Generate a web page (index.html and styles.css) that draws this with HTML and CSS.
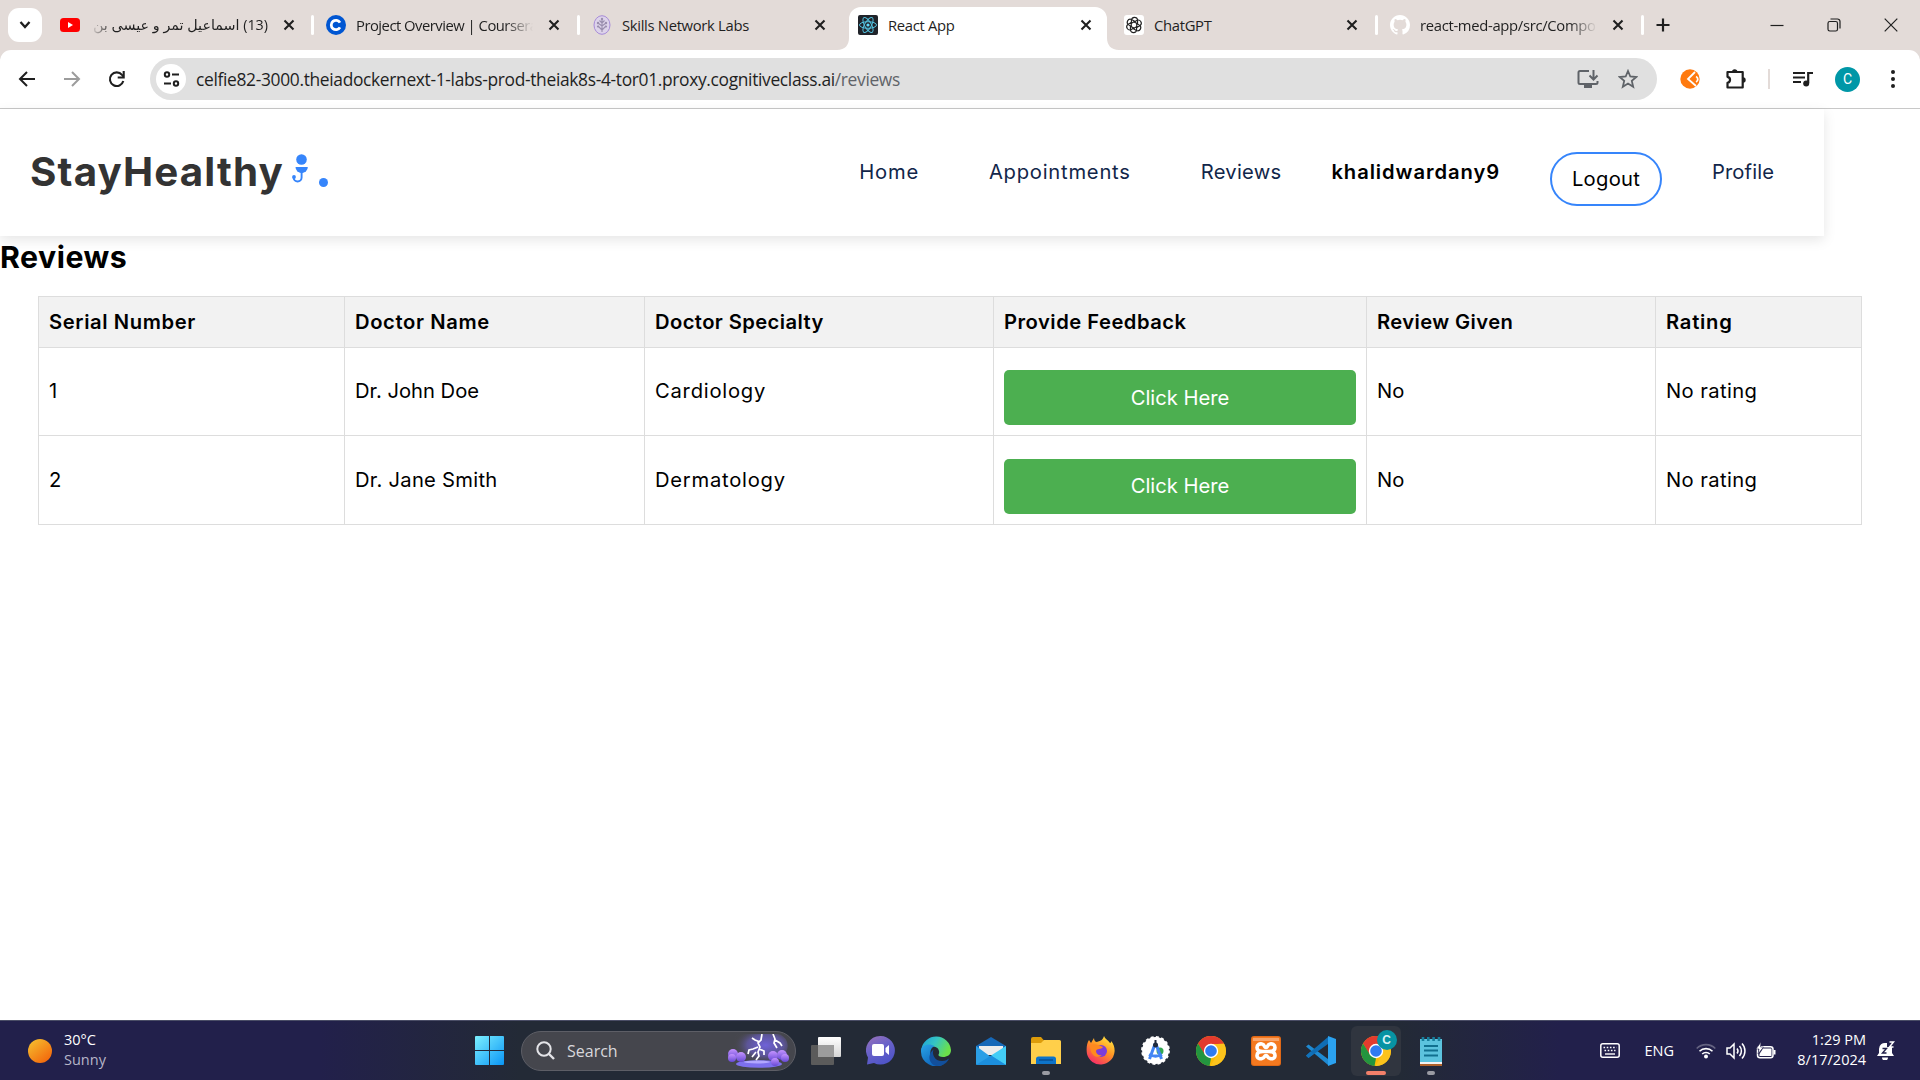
FILE: index.html
```html
<!DOCTYPE html>
<html lang="en">
<head>
<meta charset="utf-8">
<title>React App</title>
<link rel="stylesheet" href="styles.css">
</head>
<body>
<div class="screen">
  <header class="tabstrip">
    <button class="tab-search"><svg width="14" height="10" viewBox="0 0 14 10"><path d="M2.5 2l4.500 5 4.500-5" fill="none" stroke="#1f1f1f" stroke-width="2.300"/></svg></button>
    <div class="tab tab-first">
      <svg class="fav" viewBox="0 0 20 20"><rect y="3" width="20" height="14" rx="3.500" fill="#f00"/><path d="M8 7l5 3-5 3z" fill="#fff"/></svg>
      <span class="tab-title rtl" dir="rtl">(13) اسماعيل تمر و عيسى بن</span>
      <svg class="x" viewBox="0 0 12 12"><path d="M1.500 1.500l9 9M10.500 1.500l-9 9"/></svg>
    </div>
    <div class="tab sep">
      <svg class="fav" viewBox="0 0 20 20"><circle cx="10" cy="10" r="10" fill="#0056d2"/><path d="M14 7.600A4.700 4.700 0 1 0 14 12.400" fill="none" stroke="#fff" stroke-width="2.800"/></svg>
      <span class="tab-title fade narrow">Project Overview | Coursera</span>
      <svg class="x" viewBox="0 0 12 12"><path d="M1.500 1.500l9 9M10.500 1.500l-9 9"/></svg>
    </div>
    <div class="tab sep">
      <svg class="fav" viewBox="0 0 20 20"><ellipse cx="10" cy="10" rx="8" ry="9.300" fill="#ddd3ea" stroke="#a78bd8"/><g fill="none" stroke="#9a8fae" stroke-width="1.100"><path d="M10 4v13M10 15L6 11M10 15l4-4M10 11L6 8M10 11l4-3M10 8L7.500 5.500M10 8l2.500-2.500"/></g><g fill="#9a8fae"><circle cx="10" cy="4" r="1.200"/><circle cx="6" cy="8" r="1.200"/><circle cx="14" cy="8" r="1.200"/><circle cx="6" cy="11.500" r="1.100"/><circle cx="14" cy="11.500" r="1.100"/></g></svg>
      <span class="tab-title">Skills Network Labs</span>
      <svg class="x" viewBox="0 0 12 12"><path d="M1.500 1.500l9 9M10.500 1.500l-9 9"/></svg>
    </div>
    <div class="tab active">
      <svg class="tab-shape" width="282" height="43" viewBox="0 0 282 43"><path d="M0 43c8 0 12-5 12-12V12A12 12 0 0 1 24 0h234a12 12 0 0 1 12 12v19c0 7 4 12 12 12z" fill="#fff"/></svg>
      <svg class="fav" viewBox="0 0 20 20"><rect width="20" height="20" rx="2" fill="#20232a"/><g fill="none" stroke="#53c1de" stroke-width="1"><ellipse cx="10" cy="10" rx="8.500" ry="3.300"/><ellipse cx="10" cy="10" rx="8.500" ry="3.300" transform="rotate(60 10 10)"/><ellipse cx="10" cy="10" rx="8.500" ry="3.300" transform="rotate(120 10 10)"/></g><circle cx="10" cy="10" r="1.600" fill="#61dafb"/></svg>
      <span class="tab-title">React App</span>
      <svg class="x" viewBox="0 0 12 12"><path d="M1.500 1.500l9 9M10.500 1.500l-9 9"/></svg>
    </div>
    <div class="tab">
      <svg class="fav" viewBox="0 0 20 20"><rect width="20" height="20" rx="3" fill="#fff"/><g fill="none" stroke="#222" stroke-width="1.150"><path id="petal" d="M9.600 7.200l3.200-1.800a3.100 3.100 0 0 1 3.300 5.200l-3.300 1.900-.1-3.800"/><use href="#petal" transform="rotate(60 10 10)"/><use href="#petal" transform="rotate(120 10 10)"/><use href="#petal" transform="rotate(180 10 10)"/><use href="#petal" transform="rotate(240 10 10)"/><use href="#petal" transform="rotate(300 10 10)"/></g></svg>
      <span class="tab-title">ChatGPT</span>
      <svg class="x" viewBox="0 0 12 12"><path d="M1.500 1.500l9 9M10.500 1.500l-9 9"/></svg>
    </div>
    <div class="tab sep">
      <svg class="fav" viewBox="0 0 16 16"><path fill="#fff" d="M8 0C3.580 0 0 3.580 0 8c0 3.540 2.290 6.530 5.470 7.590.4.070.55-.17.55-.38 0-.19-.01-.82-.01-1.490-2.010.37-2.530-.49-2.690-.94-.09-.23-.48-.94-.82-1.130-.28-.15-.68-.52-.01-.53.63-.01 1.080.58 1.230.82.72 1.210 1.870.87 2.330.66.070-.52.28-.87.51-1.070-1.780-.2-3.640-.89-3.640-3.950 0-.87.31-1.590.82-2.150-.08-.2-.36-1.020.08-2.120 0 0 .67-.21 2.200.82a7.600 7.600 0 0 1 4 0c1.530-1.040 2.200-.82 2.200-.82.44 1.100.16 1.920.08 2.120.51.56.82 1.270.82 2.150 0 3.070-1.870 3.750-3.650 3.950.29.25.54.73.54 1.480 0 1.070-.01 1.930-.01 2.200 0 .21.15.46.55.38A8 8 0 0 0 16 8c0-4.420-3.580-8-8-8z"/></svg>
      <span class="tab-title fade">react-med-app/src/Compo</span>
      <svg class="x" viewBox="0 0 12 12"><path d="M1.500 1.500l9 9M10.500 1.500l-9 9"/></svg>
    </div>
    <div class="newtab sep"><svg width="14" height="14" viewBox="0 0 14 14"><path d="M7 .5v13M.5 7h13" stroke="#1f1f1f" stroke-width="2.200"/></svg></div>
    <div class="winctl">
      <svg width="14" height="14" viewBox="0 0 14 14"><path d="M.5 7.500h13"/></svg>
      <svg width="14" height="14" viewBox="0 0 14 14"><rect x="1" y="3.500" width="9.500" height="9.500" rx="1.800"/><path d="M3.500 1h7a2.500 2.500 0 0 1 2.500 2.500v7"/></svg>
      <svg width="14" height="14" viewBox="0 0 14 14"><path d="M.7.7l12.600 12.600M13.300.7L.7 13.300"/></svg>
    </div>
  </header>

  <div class="toolbar">
    <div class="nav-btns">
      <svg width="18" height="18" viewBox="0 0 18 18"><path d="M17 9H2.500M9 2L2 9l7 7" fill="none" stroke="#1f1f1f" stroke-width="2"/></svg>
      <svg width="18" height="18" viewBox="0 0 18 18"><path d="M1 9h14.500M9 2l7 7-7 7" fill="none" stroke="#9c9c9c" stroke-width="2"/></svg>
      <svg width="18" height="18" viewBox="0 0 18 18"><path d="M15.300 11A6.800 6.800 0 1 1 14 4.900L15.500 6.500" fill="none" stroke="#1f1f1f" stroke-width="2.100"/><path d="M15.700 1v6.500h-6" fill="none" stroke="#1f1f1f" stroke-width="2.100"/></svg>
    </div>
    <div class="omnibox">
      <span class="site-info"><svg width="17" height="16" viewBox="0 0 17 16"><g fill="none" stroke="#1f1f1f" stroke-width="2"><circle cx="4" cy="3.500" r="2.200"/><path d="M9 3.500h7M1 12.500h7"/><circle cx="13" cy="12.500" r="2.200"/></g></svg></span>
      <span class="url">celfie82-3000.theiadockernext-1-labs-prod-theiak8s-4-tor01.proxy.cognitiveclass.ai<span class="path">/reviews</span></span>
      <svg class="oi" width="22" height="20" viewBox="0 0 22 20"><g fill="none" stroke="#5f6368" stroke-width="2"><path d="M12 2H3a1.500 1.500 0 0 0-1.500 1.500v10A1.500 1.500 0 0 0 3 15h16a1.500 1.500 0 0 0 1.500-1.500V12M16.500 1v9M12.500 6.500l4 4 4-4"/></g><path d="M7 15h8v4H7z" fill="#5f6368"/></svg>
      <svg class="oi" width="20" height="20" viewBox="0 0 20 20"><path d="M10 2l2.300 5.500 6 .5-4.500 3.900 1.400 5.900L10 14.600l-5.200 3.200 1.400-5.900L1.700 8l6-.5z" fill="none" stroke="#5f6368" stroke-width="1.800"/></svg>
    </div>
    <div class="exts">
      <svg width="20" height="20" viewBox="0 0 20 20"><circle cx="10" cy="10" r="9.700" fill="#ff7a0f"/><path d="M15 3L8 10l8 7" fill="none" stroke="#fff" stroke-width="1.800"/><path d="M16 7.500a3 3 0 0 1 0 5.500" fill="none" stroke="#fff" stroke-width="1.800"/></svg>
      <svg class="puzzle" width="22" height="22" viewBox="0 0 22 22"><path d="M2.500 4h15.200v15.500H2.500v-4.600a3.100 3.100 0 0 0 0-6.100z" fill="none" stroke="#1f1f1f" stroke-width="2.200" stroke-linejoin="round"/><path d="M7 4a2.700 2.700 0 0 1 5.400 0zM18 9.300a2.700 2.700 0 0 1 0 5.400z" fill="#1f1f1f"/></svg>
      <i class="vbar"></i>
      <svg class="music" width="20" height="16" viewBox="0 0 20 16"><path d="M0 2h12M0 6.500h12M0 11h8" stroke="#1f1f1f" stroke-width="2"/><path d="M15.200 12V2H20" fill="none" stroke="#1f1f1f" stroke-width="2.200"/><circle cx="13.200" cy="12.500" r="3" fill="#1f1f1f"/></svg>
      <span class="avatar">C</span>
      <svg width="4" height="18" viewBox="0 0 4 18"><g fill="#1f1f1f"><circle cx="2" cy="2" r="2"/><circle cx="2" cy="9" r="2"/><circle cx="2" cy="16" r="2"/></g></svg>
    </div>
  </div>

  <main class="page">
    <nav class="navbar">
      <div class="logo"><span class="logo-text">StayHealthy</span>
        <svg class="logo-icon" width="16" height="30" viewBox="0 0 16 30"><g fill="#3685fb"><circle cx="9.500" cy="5.500" r="5.300"/><path d="M3.500 13h12.300a6 6 0 0 1-12.300 0z"/><circle cx="2" cy="23" r="1.900"/></g><path d="M9.600 18v5.500a4 4 0 0 1-8 0V23" fill="none" stroke="#3685fb" stroke-width="1.900"/></svg>
        <i class="dot"></i>
      </div>
      <div class="links">
        <a class="wide ls-8">Home</a>
        <a class="wide ls-8">Appointments</a>
        <a class="ls-3">Reviews</a>
        <b class="ls-9">khalidwardany9</b>
        <button class="logout ls-3">Logout</button>
        <a class="ls-1">Profile</a>
      </div>
    </nav>
    <h1 class="ls-5">Reviews</h1>
    <table>
      <colgroup><col class="c1"><col class="c2"><col class="c3"><col class="c4"><col class="c5"><col class="c6"></colgroup>
      <thead><tr><th class="ls-6">Serial Number</th><th class="ls-6">Doctor Name</th><th class="ls-4">Doctor Specialty</th><th class="ls-5">Provide Feedback</th><th class="ls-4">Review Given</th><th class="ls-8">Rating</th></tr></thead>
      <tbody>
        <tr><td>1</td><td>Dr. John Doe</td><td class="ls-8">Cardiology</td><td><button class="feedback">Click Here</button></td><td>No</td><td class="ls-4">No rating</td></tr>
        <tr class="last"><td>2</td><td class="ls-3">Dr. Jane Smith</td><td class="ls-8">Dermatology</td><td><button class="feedback">Click Here</button></td><td>No</td><td class="ls-4">No rating</td></tr>
      </tbody>
    </table>
  </main>

  <footer class="taskbar">
    <div class="weather">
      <svg width="24" height="24" viewBox="0 0 24 24"><defs><linearGradient id="sun" x1="0" y1="0" x2=".8" y2="1"><stop offset="0" stop-color="#f5c431"/><stop offset="1" stop-color="#f3650b"/></linearGradient></defs><circle cx="12" cy="12" r="12" fill="url(#sun)"/></svg>
      <div class="weather-text">30°C<br><span class="dim">Sunny</span></div>
    </div>
    <svg class="start" width="29" height="29" viewBox="0 0 29 29"><defs><linearGradient id="win" x1="0" y1="0" x2="1" y2="1" ><stop offset="0" stop-color="#7cf0ff"/><stop offset="1" stop-color="#0a95f5"/></linearGradient></defs><path d="M1 0h13v14H0V1a1 1 0 0 1 1-1zM15 0h13a1 1 0 0 1 1 1v13H15zM0 15h14v14H1a1 1 0 0 1-1-1zM15 15h14v13a1 1 0 0 1-1 1H15z" fill="url(#win)"/></svg>
    <div class="search">
      <svg width="19" height="19" viewBox="0 0 19 19"><circle cx="8" cy="8" r="6.700" fill="none" stroke="#e4e4e8" stroke-width="2"/><path d="M13 13l5 5" stroke="#e4e4e8" stroke-width="2.400"/></svg>
      <span class="search-text">Search</span>
      <svg class="storm" width="62" height="34" viewBox="0 0 62 34"><defs><radialGradient id="glow" cx=".6" cy=".35" r=".55"><stop offset="0" stop-color="#6f62d8"/><stop offset=".6" stop-color="#5c5596"/><stop offset="1" stop-color="#49484f" stop-opacity=".2"/></radialGradient><linearGradient id="bush" x1="0" y1="0" x2="0" y2="1"><stop offset="0" stop-color="#c493ff"/><stop offset="1" stop-color="#6648d4"/></linearGradient></defs><path d="M8 0h42a12 12 0 0 1 8 18l-4 14H12L4 16z" fill="url(#glow)"/><ellipse cx="31" cy="30" rx="23" ry="3.800" fill="#7d70ee"/><ellipse cx="29" cy="28" rx="13" ry="1.500" fill="#b2a7ff"/><g fill="url(#bush)"><circle cx="5" cy="20" r="5"/><circle cx="4" cy="24" r="4"/><circle cx="13" cy="23" r="5"/><circle cx="45" cy="22" r="5"/><circle cx="54" cy="21" r="5"/><circle cx="57" cy="24" r="4"/><circle cx="47" cy="28" r="4"/></g><g fill="none" stroke="#fff" stroke-width="1.700"><path d="M34 0l-1 6-3 3 2 4-2 5 1 4-3 4M30 13l-5 2-4 1-1 4M32 8l-5-2-3-2M31 15l5 2v4M28 18l-4 5M45 0l2 5-1 4 3 5M47 6l5 3 2 3"/></g></svg>
    </div>
    <div class="apps">
      <span class="app"><svg width="30" height="28" viewBox="0 0 30 28"><defs><linearGradient id="tv" x1="0" y1="0" x2="0" y2="1"><stop offset="0" stop-color="#fff"/><stop offset="1" stop-color="#d5d5d5"/></linearGradient></defs><rect y="8" width="23" height="20" rx="1" fill="#5b5b5b"/><rect x="7" width="23" height="20" rx="1" fill="url(#tv)"/><rect x="7" y="8" width="16" height="12" fill="#9c9c9c"/></svg></span>
      <span class="app"><svg width="29" height="29" viewBox="0 0 29 29"><defs><linearGradient id="chat" x1="0" y1="0" x2=".5" y2="1"><stop offset="0" stop-color="#9b72b8"/><stop offset=".5" stop-color="#6a62c9"/><stop offset="1" stop-color="#5055c8"/></linearGradient></defs><path d="M14.500 0A14.300 14.300 0 1 1 8 27L1 28.500l1-7A14.300 14.300 0 0 1 14.500 0z" fill="url(#chat)"/><rect x="6" y="8" width="12" height="12" rx="2" fill="#fff"/><path d="M19.500 12l3.500-3v10l-3.500-3z" fill="#fff"/></svg></span>
      <span class="app"><svg width="30" height="30" viewBox="0 0 30 30"><defs><linearGradient id="e1" x1="0" y1="0" x2="1" y2=".4"><stop offset="0" stop-color="#1b9fdd"/><stop offset=".5" stop-color="#35c5c3"/><stop offset="1" stop-color="#6be04a"/></linearGradient><linearGradient id="e2" x1="0" y1="0" x2=".7" y2="1"><stop offset="0" stop-color="#2aa5e8"/><stop offset="1" stop-color="#0b5fb8"/></linearGradient></defs><path d="M.3 13A15 15 0 0 1 30 14c0 5-4 7-8 7-3 0-5-1-4.500-2.500 1.500-1.500 1-7.500-5-8C7 10 2 12 .3 16z" fill="url(#e1)"/><path d="M0 15c0-7 9-8 13.500-5C9 12 8 18 11 23c2.500 4 8 6 12 5A15 15 0 0 1 0 15z" fill="url(#e2)"/><path d="M12.500 13.500c-2 5 1.500 12 9 11.500 3 0 5-1.500 6.500-2.500-1.500 4-6 7.500-12 7.500-7-1-11-10-3.500-16.500z" fill="#124f9c"/></svg></span>
      <span class="app"><svg width="30" height="28" viewBox="0 0 30 28"><path d="M0 9L15 0l15 9v4H0z" fill="#1668b8"/><path d="M3 9h24v9H3z" fill="#ececec"/><path d="M0 9l15 11L30 9v18a1 1 0 0 1-1 1H1a1 1 0 0 1-1-1z" fill="#2b9fe6"/><path d="M30 9v19L15 18.500z" fill="#43cdf6"/><path d="M0 28l15-9.500L30 28z" fill="#1c8fde"/></svg></span>
      <span class="app run"><svg width="30" height="28" viewBox="0 0 30 28"><path d="M0 2a2 2 0 0 1 2-2h8l3 3.500h10V10H0z" fill="#dd9c0a"/><path d="M0 6h10l3-3h15.500A1.500 1.500 0 0 1 30 4.500V27H0z" fill="#ffcf4a"/><path d="M5 27v-5a2.500 2.500 0 0 1 2.500-2.500h15A2.500 2.500 0 0 1 25 22v5z" fill="#0e74c9"/><path d="M8 23h14" stroke="#0a4f92" stroke-width="1.500"/></svg></span>
      <span class="app"><svg width="29" height="29" viewBox="0 0 29 29"><defs><linearGradient id="ff" x1=".8" y1="0" x2=".2" y2="1"><stop offset="0" stop-color="#ffe941"/><stop offset=".45" stop-color="#ff9424"/><stop offset="1" stop-color="#f5246d"/></linearGradient></defs><path d="M18 0c1 3 4 4 6 7 1 0 1-1 1-2 3 3 4 8 3.500 11A14 14 0 0 1 1 18C0 12 1 7 3 4l2 3 3-5c0 2 1 4 3 4 3-1 6-2 7-6z" fill="url(#ff)"/><circle cx="15" cy="15" r="6" fill="#7b3ddb"/><path d="M4 9c5-2 9 0 13 2-2 3-6 1-7 4 0 3 3 5 6 4-4 4-12 2-12-10z" fill="#ff8a1f"/></svg></span>
      <span class="app"><svg width="29" height="29" viewBox="0 0 29 29"><circle cx="14.500" cy="14.500" r="13.400" fill="#fff"/><circle cx="14.500" cy="14.500" r="13.500" fill="none" stroke="#fff" stroke-width="1.800" stroke-dasharray="3 2.300"/><circle cx="19" cy="15" r="3.500" fill="#34a853"/><path d="M14 8L8.500 23M15 8l5.500 15M8 18.500c4 2 9 2 13 0" fill="none" stroke="#4285f4" stroke-width="3"/><circle cx="14.500" cy="9" r="2.500" fill="#202b3d"/><path d="M14.500 4v4" stroke="#202b3d" stroke-width="2"/></svg></span>
      <span class="app"><svg width="30" height="30" viewBox="0 0 30 30"><g id="chrome"><circle cx="15" cy="15" r="15" fill="#fbbc05"/><path d="M2 7.500A15 15 0 0 1 28 7.500L15 8.500 8.500 18.800z" fill="#e33b2e"/><path d="M2 7.500L8.900 18.600 15 22.200 13.500 30A15 15 0 0 1 2 7.500z" fill="#23953f"/><path d="M15 8h13.200A15 15 0 0 1 14.500 30l6.800-11.500z" fill="#fcc31c"/><circle cx="15" cy="15" r="7.200" fill="#fff"/><circle cx="15" cy="15" r="5.800" fill="#2f7bf0"/></g></svg></span>
      <span class="app"><svg width="30" height="30" viewBox="0 0 30 30"><rect width="30" height="30" rx="3" fill="#df6817"/><rect x="1" y="1" width="28" height="28" rx="2" fill="#f4791f"/><path d="M2 2h26v3H2z" fill="#f9a56a"/><g fill="none" stroke="#fff" stroke-width="3.600" stroke-linejoin="round"><path d="M12 15.500H18M12 15.500c-4 0-6-1-6-4s3-4 5-3.500c3 .5 2 3.500 4 3.500s1-3 4-3.500c2-.5 5 .5 5 3.500s-2 4-6 4c4 0 6 1 6 4s-3 3.500-5 3c-3-.5-2-3-4-3s-1 2.500-4 3c-2 .5-5 0-5-3s2-4 6-4z"/></g></svg></span>
      <span class="app"><svg width="30" height="30" viewBox="0 0 30 30"><path d="M0 10.500l2.500-2L22 23v6z" fill="#1f8ad2"/><path d="M22 1v7L2.500 22 0 19.700z" fill="#0f6db5"/><path d="M22 0l8 3v24l-8 3z" fill="#2ba2f0"/><path d="M0 19.500l2.500 2.500 5-4-3-2.500z" fill="#1272ba"/></svg></span>
      <span class="app current"><svg width="30" height="30" viewBox="0 0 30 30"><use href="#chrome"/></svg><b class="badge">C</b></span>
      <span class="app run"><svg width="22" height="30" viewBox="0 0 22 30"><path d="M0 3h22v24H0z" fill="#5cc3de"/><path d="M0 26h22v2H0z" fill="#f2f2f2"/><path d="M0 28h22v2H0z" fill="#b0622a"/><path d="M4 10h14M4 14.500h14M4 19.500h14" stroke="#11708f" stroke-width="1.800"/><path d="M3 1v4M8.300 1v4M13.600 1v4M19 1v4" stroke="#177e9c" stroke-width="2.600"/></svg></span>
    </div>
    <div class="tray">
      <svg class="kbd" width="20" height="15" viewBox="0 0 20 15"><rect x=".8" y=".8" width="18.400" height="13.400" rx="2" fill="none" stroke="#fff" stroke-width="1.500"/><path d="M3.500 4.500h13M4.500 7.500h11" stroke="#fff" stroke-width="1.600" stroke-dasharray="1.600 1.600"/><path d="M5 11h10" stroke="#fff" stroke-width="1.400"/></svg>
      <span class="eng">ENG</span>
      <svg class="wifi" width="20" height="16" viewBox="0 0 20 16"><g fill="none" stroke="#fff" stroke-width="1.600"><path d="M.7 5.500a13 13 0 0 1 18.600 0" opacity=".3"/><path d="M3.500 8.300a9.200 9.200 0 0 1 13 0M6.200 11a5.400 5.400 0 0 1 7.600 0"/></g><circle cx="10" cy="13.500" r="2" fill="#fff"/></svg>
      <svg class="vol" width="20" height="18" viewBox="0 0 20 18"><g fill="none" stroke="#fff" stroke-width="1.500"><path d="M1 6h3l4-4v14l-4-4H1z"/><path d="M11 6.500a4 4 0 0 1 0 5M13.500 4a7.500 7.500 0 0 1 0 10M16 1.500a11 11 0 0 1 0 15"/></g></svg>
      <svg class="bat" width="20" height="17" viewBox="0 0 20 17"><rect x="1.500" y="4.700" width="15.500" height="11" rx="2.500" fill="none" stroke="#fff" stroke-width="1.500"/><path d="M7 6.500h8.500V14h-12v-2z" fill="#fff"/><path d="M18.500 8v4.500" stroke="#fff" stroke-width="2"/><path d="M5 0L0 7h3l-1 5 5.500-7H4.500z" fill="#fff" stroke="#22204a" stroke-width=".6"/></svg>
      <div class="clock">1:29 PM<br>8/17/2024</div>
      <svg class="bell" width="18" height="19" viewBox="0 0 18 19"><path d="M0 15l2-3V8a6 6 0 0 1 7-6h1v4h5v6l2 3zM5 16.500h6a3 3 0 0 1-6 0z" fill="#fff"/><path d="M5.500 7.500h4l-4 4.500h4" fill="none" stroke="#22204a" stroke-width="1.400"/><path d="M12.500 1h4l-4 5h4" fill="none" stroke="#fff" stroke-width="1.500"/></svg>
    </div>
  </footer>
</div>
</body>
</html>
```
FILE: styles.css
```css
* { box-sizing: border-box; }
body { margin: 0; background: #fff; }
button { font: inherit; border: 0; padding: 0; }
svg { display: block; flex: none; }
.screen { width: 1920px; height: 1080px; overflow: hidden; display: flex; flex-direction: column; font-family: "Open Sans", "Noto Sans", sans-serif; color: #1f1f1f; background: #e3dbd8; }

.ls-1 { letter-spacing: .1px; }
.ls-3 { letter-spacing: .27px; }
.ls-4 { letter-spacing: .4px; }
.ls-5 { letter-spacing: .5px; }
.ls-6 { letter-spacing: .62px; }
.ls-8 { letter-spacing: .76px; }
.ls-9 { letter-spacing: .92px; }

/* Tab strip */
.tabstrip { height: 50px; flex: none; display: flex; align-items: center; }
.tab-search { width: 34px; height: 34px; margin: 0 8px; border-radius: 11px; background: #fff; display: grid; place-items: center; }
.tab { width: 266px; height: 50px; display: flex; align-items: center; padding: 0 18px 0 14px; position: relative; font-size: 14.800px; letter-spacing: -.31px; }
.tab-first { width: 262px; padding-left: 10px; padding-right: 17px; }
.fav { width: 20px; height: 20px; margin-right: 10px; position: relative; }
.tab-title { flex: 1; min-width: 0; white-space: nowrap; margin-right: 15px; padding-bottom: 1px; line-height: 24px; position: relative; }
.narrow { letter-spacing: -.5px; }
.rtl { font-family: "Open Sans", "DejaVu Sans", sans-serif; font-size: 14.300px; letter-spacing: 0; -webkit-mask: linear-gradient(to right, transparent, #000 24px); }
.fade { -webkit-mask: linear-gradient(to left, transparent, #000 28px); }
.x { width: 12px; height: 12px; position: relative; }
.x path { stroke: #1f1f1f; stroke-width: 2.100; }
.sep::before { content: ""; width: 3px; height: 20px; border-radius: 2px; background: #fff; position: absolute; left: -1px; top: 15px; }
.tab-shape { position: absolute; left: -7px; top: 7px; }
.newtab { width: 42px; height: 50px; position: relative; display: grid; place-items: center; }
.winctl { margin-left: auto; display: flex; gap: 43px; padding-right: 22px; }
.winctl svg { fill: none; stroke: #1f1f1f; stroke-width: 1.200; }

/* Toolbar */
.toolbar { height: 59px; flex: none; border-radius: 11px 11px 0 0; display: flex; align-items: center; background: #fff; box-shadow: inset 0 -1px #c8c8c8; padding-bottom: 1px; }
.nav-btns { display: flex; gap: 27px; padding-left: 18px; width: 150px; }
.omnibox { width: 1507px; height: 42px; border-radius: 21px; background: #e0e0e0; display: flex; align-items: center; padding: 0 19px 0 6px; }
.site-info { width: 30px; height: 30px; border-radius: 50%; background: #fff; display: grid; place-items: center; margin-right: 10px; }
.url { flex: 1; font-size: 17.400px; letter-spacing: -.335px; white-space: nowrap; }
.path { color: #5f6368; }
.oi + .oi { margin-left: 19px; }
.exts { display: flex; align-items: center; flex: 1; padding-left: 23px; }
.puzzle { margin-left: 25px; }
.vbar { width: 2px; height: 20px; background: #e3dbd8; margin-left: 21px; }
.music { margin-left: 23px; }
.avatar { width: 25px; height: 25px; border-radius: 50%; background: #0097a7; color: #fff; font: 14px/25px Roboto, sans-serif; text-align: center; margin: 0 31px 0 22px; }

/* Page */
.page { flex: 1; background: #fff; font-family: Inter, sans-serif; font-size: 20.200px; color: #000; }
.navbar { width: 1824px; height: 127px; display: flex; align-items: center; justify-content: space-between; padding: 0 50px 2px 30px; box-shadow: 0 4px 12px rgba(0,0,0,.1); }
.logo { display: flex; align-items: center; color: #333; }
.logo-text { font-size: 40.300px; font-weight: 700; letter-spacing: 1.150px; margin-right: 8px; }
.logo-icon { margin-bottom: 5px; }
.dot { width: 9px; height: 9px; border-radius: 50%; background: #3685fb; margin: 22px 0 0 11px; }
.links { display: flex; align-items: center; gap: 50px; color: #12264a; }
.links b { color: #000; font-weight: 600; }
.wide { margin-right: 20px; }
.logout { width: 112px; height: 54px; border: 2px solid #3685fb; border-radius: 27px; background: #fff; color: #000; margin-top: 14px; }
h1 { margin: 0 0 17px; font-size: 30.300px; line-height: 43px; font-weight: 700; }
table { width: 1823px; margin-left: 38px; border-collapse: collapse; table-layout: fixed; }
.c1 { width: 306px; } .c2 { width: 300px; } .c3 { width: 349px; } .c4 { width: 373px; } .c5 { width: 289px; } .c6 { width: 206px; }
th, td { border: 1px solid #ddd; padding: 0 10px; text-align: left; line-height: 24px; }
th { background: #f2f2f2; height: 51px; font-weight: 600; }
td { height: 88px; padding-bottom: 1px; }
.last td { height: 89px; }
.feedback { display: block; width: 352px; height: 55px; margin-top: 13px; border-radius: 5px; background: #4caf50; color: #fff; }

/* Taskbar */
.taskbar { height: 60px; flex: none; border-top: 1px solid #4a4d66; background: linear-gradient(to right, #22204b 0, #22204b 320px, #232a36 520px, #232a36 1400px, #22204b 1560px); display: flex; align-items: center; color: #fff; font-size: 14.500px; }
.weather { display: flex; align-items: center; gap: 12px; width: 475px; padding-left: 28px; line-height: 20px; }
.weather-text { padding-bottom: 2px; }
.dim { color: #b6b6c8; }
.search { width: 275px; height: 40px; margin-left: 17px; border-radius: 20px; background: #45464d; border: 1px solid #5d5e66; display: flex; align-items: center; padding: 0 5px 0 14px; }
.search-text { flex: 1; padding-left: 12px; font-size: 16px; color: #d8d8dc; }
.apps { display: flex; margin-left: 2px; }
.app { width: 55px; height: 50px; display: grid; place-items: center; position: relative; }
.run::after, .current::after { content: ""; position: absolute; bottom: 1px; width: 8px; height: 4px; border-radius: 2px; background: #9a9ba3; }
.current { width: 50px; margin: 0 2.500px; background: #30353f; border-radius: 6px; }
.current::after { width: 20px; background: #f3806a; }
.badge { position: absolute; left: 26px; top: 4px; width: 20px; height: 20px; border-radius: 50%; background: #0793a3; color: #d9f2f4; font: 700 12px/20px "Liberation Sans", sans-serif; text-align: center; }
.tray { margin-left: auto; display: flex; align-items: center; padding-right: 25px; }
.eng { margin: 0 22px 0 24px; }
.vol { margin: 0 10px; }
.clock { width: 90px; text-align: right; line-height: 20px; margin-right: 11px; padding-bottom: 2px; }
```
